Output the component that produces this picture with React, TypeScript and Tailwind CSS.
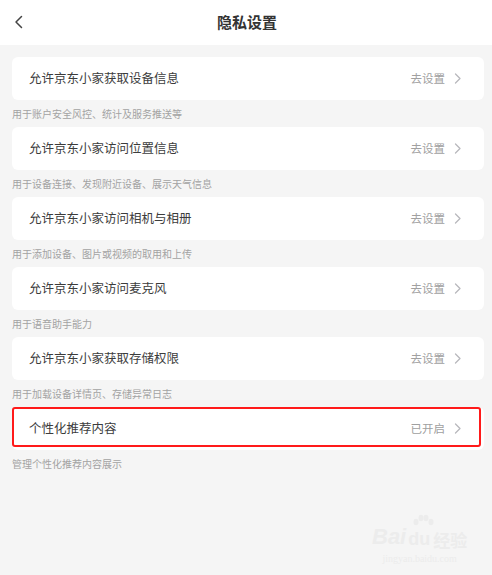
import React from 'react';

type Item = {
  title: string;
  desc: string;
  status: string;
  marked?: boolean;
};

const items: Item[] = [
  { title: '允许京东小家获取设备信息', desc: '用于账户安全风控、统计及服务推送等', status: '去设置' },
  { title: '允许京东小家访问位置信息', desc: '用于设备连接、发现附近设备、展示天气信息', status: '去设置' },
  { title: '允许京东小家访问相机与相册', desc: '用于添加设备、图片或视频的取用和上传', status: '去设置' },
  { title: '允许京东小家访问麦克风', desc: '用于语音助手能力', status: '去设置' },
  { title: '允许京东小家获取存储权限', desc: '用于加载设备详情页、存储异常日志', status: '去设置' },
  { title: '个性化推荐内容', desc: '管理个性化推荐内容展示', status: '已开启', marked: true },
];

const Chevron: React.FC = () => (
  <svg width="8" height="11" viewBox="0 0 8 11" fill="none" className="ml-[9px]">
    <path d="M1.5 1L6 5.5L1.5 10" stroke="#b8b8bd" strokeWidth="1.3" strokeLinecap="round" strokeLinejoin="round" />
  </svg>
);

const App: React.FC = () => {
  return (
    <div
      className="relative w-[492px] h-[575px] overflow-hidden bg-[#f5f5f5]"
      style={{ fontFamily: '"Noto Sans CJK SC", "Noto Sans", sans-serif' }}
    >
      {/* Header */}
      <div className="relative h-[45px] bg-white flex items-center justify-center">
        <svg width="10" height="14" viewBox="0 0 10 14" fill="none" className="absolute left-[14px] top-[15px]">
          <path d="M7.5 1.5L2 7L7.5 12.5" stroke="#444" strokeWidth="1.5" strokeLinecap="round" strokeLinejoin="round" />
        </svg>
        <h1 className="text-[15px] font-bold text-[#333] ml-[2px]">隐私设置</h1>
      </div>

      {/* Settings list */}
      <div className="pt-[12px] pl-[12px] pr-[8px]">
        {items.map((item) => (
          <div key={item.title}>
            <div className="relative h-[43px] bg-white rounded-[6px] flex items-center pl-[17px] pr-[22px]">
              <span className="flex-1 text-[12.5px] text-[#3c3c3c]">{item.title}</span>
              <span className="text-[11.5px] text-[#a0a0a0]">{item.status}</span>
              <Chevron />
              {item.marked && (
                <div className="absolute left-0 top-0 right-[3px] bottom-[3px] border-[2.5px] border-[#ff1a1a] rounded-[3px]" />
              )}
            </div>
            <div className="h-[27px] flex items-center text-[10px] text-[#a3a3a3]">{item.desc}</div>
          </div>
        ))}
      </div>

      {/* Watermark */}
      <div className="absolute left-[372px] top-[514px] flex flex-col items-center text-[#ececec]">
        <svg width="26" height="14" viewBox="0 0 26 14" className="ml-[6px] mb-[-2px]" fill="#ececec">
          <ellipse cx="6" cy="8" rx="2.5" ry="3.2" />
          <ellipse cx="11" cy="4" rx="2.5" ry="3.2" />
          <ellipse cx="16" cy="4" rx="2.5" ry="3.2" />
          <ellipse cx="21" cy="8" rx="2.5" ry="3.2" />
        </svg>
        <div className="flex items-end leading-none">
          <span className="text-[22px] font-bold italic" style={{ fontFamily: '"Liberation Sans", sans-serif' }}>Bai</span>
          <span className="text-[18px] font-bold ml-[2px]" style={{ fontFamily: '"Liberation Sans", sans-serif' }}>du</span>
          <span className="text-[17px] font-bold ml-[3px]">经验</span>
        </div>
        <span className="text-[10px] mt-[3px]" style={{ fontFamily: '"Liberation Serif", serif' }}>jingyan.baidu.com</span>
      </div>
    </div>
  );
};

export default App;
